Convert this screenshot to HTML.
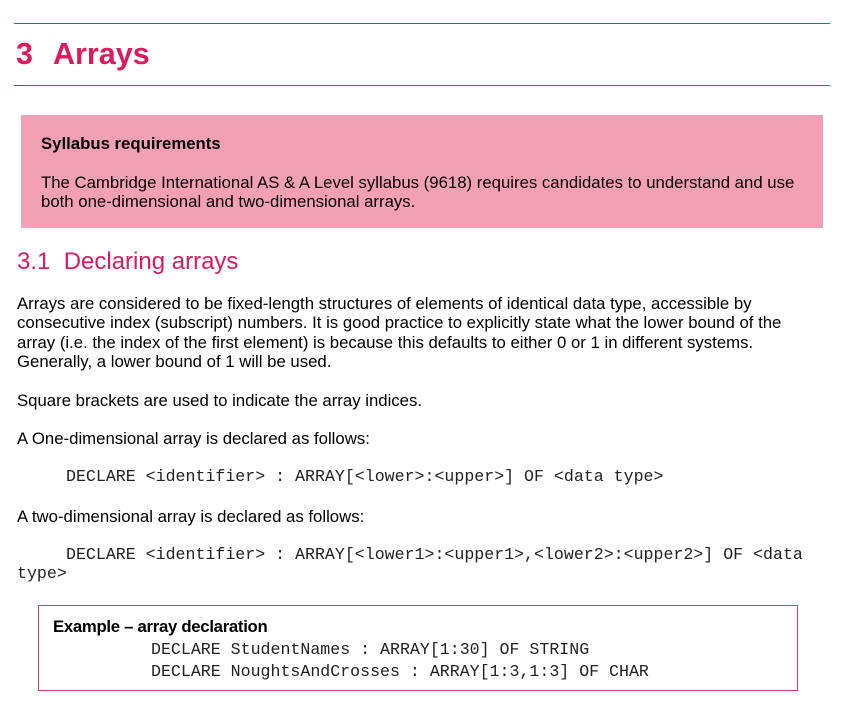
<!DOCTYPE html>
<html><head><meta charset="utf-8"><style>
body{margin:0;width:857px;height:703px;background:#fff;position:relative;overflow:hidden;font-family:"Liberation Sans",Arial,sans-serif;color:#000}
.a{position:absolute;white-space:nowrap}
.t{font-size:16.75px;line-height:19.4px}
.m{font-family:"Liberation Mono","Courier New",monospace;font-size:16.6px;line-height:20px;color:#222}
.hr{position:absolute;left:14px;width:816px;height:1px;background:#d0245a}
.h{font-size:30.5px;font-weight:bold;color:#e0195a;line-height:36px}
</style></head><body>
<div class="hr" style="top:23px"></div>
<div class="a h" style="left:16px;top:36px">3</div>
<div class="a h" style="left:53px;top:36px">Arrays</div>
<div class="hr" style="top:85px"></div>
<div class="a" style="left:21px;top:115px;width:802px;height:113px;background:#f4a0b4"></div>
<div class="a t" style="left:41px;top:134px;font-weight:bold">Syllabus requirements</div>
<div class="a t" style="left:41px;top:173px">The Cambridge International AS &amp; A Level syllabus (9618) requires candidates to understand and use<br>both one-dimensional and two-dimensional arrays.</div>
<div class="a" style="left:17px;top:247px;font-size:24px;line-height:30px;color:#e0195a">3.1&nbsp;&nbsp;Declaring arrays</div>
<div class="a t" style="left:17px;top:294px">Arrays are considered to be fixed-length structures of elements of identical data type, accessible by<br>consecutive index (subscript) numbers. It is good practice to explicitly state what the lower bound of the<br>array (i.e. the index of the first element) is because this defaults to either 0 or 1 in different systems.<br>Generally, a lower bound of 1 will be used.</div>
<div class="a t" style="left:17px;top:391px">Square brackets are used to indicate the array indices.</div>
<div class="a t" style="left:17px;top:429px">A One-dimensional array is declared as follows:</div>
<div class="a m" style="left:66px;top:467px">DECLARE &lt;identifier&gt; : ARRAY[&lt;lower&gt;:&lt;upper&gt;] OF &lt;data type&gt;</div>
<div class="a t" style="left:17px;top:507px">A two-dimensional array is declared as follows:</div>
<div class="a m" style="left:66px;top:545px">DECLARE &lt;identifier&gt; : ARRAY[&lt;lower1&gt;:&lt;upper1&gt;,&lt;lower2&gt;:&lt;upper2&gt;] OF &lt;data</div>
<div class="a m" style="left:17px;top:564px">type&gt;</div>
<div class="a" style="left:38px;top:605px;width:758px;height:84px;border:1.5px solid #e4396c"></div>
<div class="a t" style="left:53px;top:617px;font-weight:bold;letter-spacing:-0.3px">Example – array declaration</div>
<div class="a m" style="left:151px;top:639px;line-height:22px">DECLARE StudentNames : ARRAY[1:30] OF STRING<br>DECLARE NoughtsAndCrosses : ARRAY[1:3,1:3] OF CHAR</div>
</body></html>
